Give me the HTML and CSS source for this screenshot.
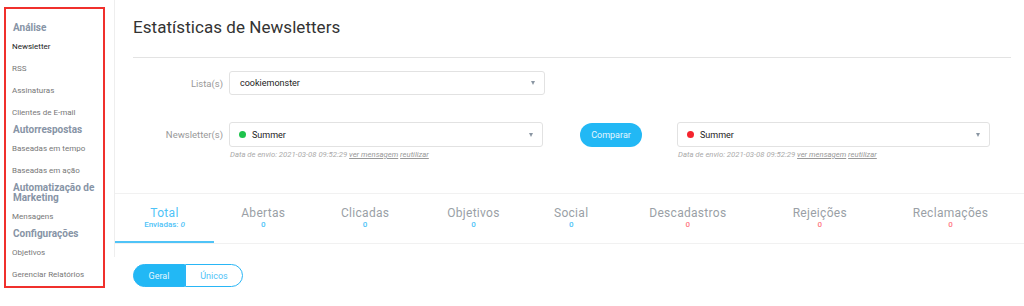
FILE: index.html
```html
<!DOCTYPE html>
<html lang="pt">
<head>
    <meta charset="UTF-8">
    <title>Estatísticas de Newsletters</title>
    <link rel="stylesheet" href="styles.css">
</head>
<body>
    <div class="page">

        <!-- Sidebar -->
        <div class="sidebar">
            <div class="side-box">
                <div class="side-title">Análise</div>
                <a class="side-link active" href="#">Newsletter</a>
                <a class="side-link" href="#">RSS</a>
                <a class="side-link" href="#">Assinaturas</a>
                <a class="side-link" href="#">Clientes de E-mail</a>
                <div class="side-title">Autorrespostas</div>
                <a class="side-link" href="#">Baseadas em tempo</a>
                <a class="side-link" href="#">Baseadas em ação</a>
                <div class="side-title">Automatização de Marketing</div>
                <a class="side-link" href="#">Mensagens</a>
                <div class="side-title">Configurações</div>
                <a class="side-link" href="#">Objetivos</a>
                <a class="side-link" href="#">Gerenciar Relatórios</a>
            </div>
        </div>

        <!-- Main content -->
        <div class="main">
            <div class="panel">
                <div class="panel-head">
                    <h1>Estatísticas de Newsletters</h1>

                    <div class="form-row row-list">
                        <label class="field-label">Lista(s)</label>
                        <div class="select wide">
                            <span class="select-text">cookiemonster</span>
                            <span class="caret"></span>
                        </div>
                    </div>

                    <div class="form-row row-news">
                        <label class="field-label">Newsletter(s)</label>
                        <div class="news-col">
                            <div class="select">
                                <span class="dot green"></span>
                                <span class="select-text">Summer</span>
                                <span class="caret"></span>
                            </div>
                            <div class="send-info">Data de envio: 2021-03-08 09:52:29 <a href="#">ver mensagem</a> <a href="#">reutilizar</a></div>
                        </div>
                        <button class="compare-btn">Comparar</button>
                        <div class="news-col">
                            <div class="select">
                                <span class="dot red"></span>
                                <span class="select-text">Summer</span>
                                <span class="caret"></span>
                            </div>
                            <div class="send-info">Data de envio: 2021-03-08 09:52:29 <a href="#">ver mensagem</a> <a href="#">reutilizar</a></div>
                        </div>
                    </div>
                </div>

                <table class="tabs">
                    <tr>
                        <td class="tab active">
                            <div class="tab-name">Total</div>
                            <div class="tab-num">Enviadas: <i>0</i></div>
                        </td>
                        <td class="tab">
                            <div class="tab-name">Abertas</div>
                            <div class="tab-num">0</div>
                        </td>
                        <td class="tab">
                            <div class="tab-name">Clicadas</div>
                            <div class="tab-num">0</div>
                        </td>
                        <td class="tab">
                            <div class="tab-name">Objetivos</div>
                            <div class="tab-num">0</div>
                        </td>
                        <td class="tab">
                            <div class="tab-name">Social</div>
                            <div class="tab-num">0</div>
                        </td>
                        <td class="tab">
                            <div class="tab-name">Descadastros</div>
                            <div class="tab-num bad">0</div>
                        </td>
                        <td class="tab">
                            <div class="tab-name">Rejeições</div>
                            <div class="tab-num bad">0</div>
                        </td>
                        <td class="tab">
                            <div class="tab-name">Reclamações</div>
                            <div class="tab-num bad">0</div>
                        </td>
                    </tr>
                </table>
            </div>

            <div class="toggle">
                <button class="toggle-btn on">Geral</button>
                <button class="toggle-btn">Únicos</button>
            </div>
        </div>

    </div>
</body>
</html>
```

FILE: styles.css
```css
* {
    margin: 0;
    padding: 0;
    box-sizing: border-box;
}

body {
    font-family: Roboto, "Liberation Sans", sans-serif;
    background: #fff;
    color: #333;
    width: 1024px;
    height: 306px;
    overflow: hidden;
}

.page {
    display: flex;
}

/* Sidebar */
.sidebar {
    width: 114px;
    flex-shrink: 0;
    padding: 7px 0 0 4px;
}

.side-box {
    width: 101px;
    border: 2px solid #f0302c;
    padding: 13px 0 0 6px;
}

.side-title {
    font-size: 10px;
    font-weight: bold;
    line-height: 10px;
    color: #8794a6;
    padding: 1px 0 3px 1px;
}

.side-link {
    display: block;
    font-size: 8px;
    line-height: 22px;
    color: #777;
    text-decoration: none;
}

.side-link.active {
    color: #222;
}

/* Main */
.main {
    flex: 1;
}

.panel {
    border-left: 1px solid #eee;
    padding-bottom: 13px;
}

.panel-head {
    padding: 15px 13px 0 18px;
}

h1 {
    font-size: 17px;
    font-weight: normal;
    letter-spacing: 0.05px;
    line-height: 24px;
    color: #333;
    padding-bottom: 18px;
    border-bottom: 1px solid #e3e3e3;
}

.form-row {
    display: flex;
    align-items: flex-start;
}

.row-list {
    margin-top: 13px;
}

.row-news {
    margin-top: 26px;
    height: 71px;
}

.field-label {
    width: 96px;
    text-align: right;
    font-size: 9.5px;
    color: #999;
    line-height: 25px;
    padding-right: 6px;
    flex-shrink: 0;
}

.select {
    display: flex;
    align-items: center;
    width: 314px;
    height: 25px;
    border: 1px solid #e2e2e2;
    border-radius: 3px;
    padding: 0 9px;
    background: #fff;
}

.row-list .select {
    width: 316px;
    height: 24px;
    padding-left: 10px;
}

.select-text {
    font-size: 9px;
    color: #222;
    flex: 1;
}

.caret {
    width: 0;
    height: 0;
    border-left: 2.5px solid transparent;
    border-right: 2.5px solid transparent;
    border-top: 4px solid #8a96a3;
}

.dot {
    width: 7px;
    height: 7px;
    border-radius: 50%;
    margin-right: 6px;
}

.dot.green {
    background: #1ec34d;
}

.dot.red {
    background: #f5242e;
}

.send-info {
    font-size: 7.7px;
    font-style: italic;
    color: #aaa;
    margin-top: 3px;
    padding-left: 1px;
}

.send-info a {
    color: #999;
}

.compare-btn {
    margin: 1px 35px 0 37px;
    width: 62px;
    height: 24px;
    border: none;
    border-radius: 12px;
    background: #22b8f5;
    color: #e4f6ff;
    font-family: inherit;
    font-size: 9px;
}

.news-col:last-child .select {
    width: 313px;
}

/* Tabs */
.tabs {
    width: 100%;
    border-collapse: collapse;
    border-top: 1px solid #f1f1f1;
    border-bottom: 1px solid #f1f1f1;
}

.tab {
    text-align: center;
    height: 50px;
    padding: 0 10px;
    vertical-align: top;
    padding-top: 12px;
}

.tab.active {
    width: 99px;
    box-shadow: inset 0 -2px 0 #4fc3f7;
}

.tab-name {
    font-size: 12px;
    line-height: 14px;
    color: #9a9fa6;
    letter-spacing: 0.3px;
}

.tab.active .tab-name {
    color: #4fc3f7;
}

.tab-num {
    font-size: 8px;
    font-weight: 500;
    line-height: 10px;
    color: #4fc3f7;
}

.tab-num.bad {
    color: #ff7a85;
}

/* Toggle */
.toggle {
    display: flex;
    margin: 7px 0 0 19px;
}

.toggle-btn {
    height: 23px;
    width: 58px;
    border: 1px solid #29b6f6;
    background: #fff;
    color: #4fc3f7;
    font-family: inherit;
    font-size: 9px;
    border-radius: 0 12px 12px 0;
}

.toggle-btn.on {
    width: 52px;
    background: #22b8f5;
    color: #e4f6ff;
    border-radius: 12px 0 0 12px;
}
```
